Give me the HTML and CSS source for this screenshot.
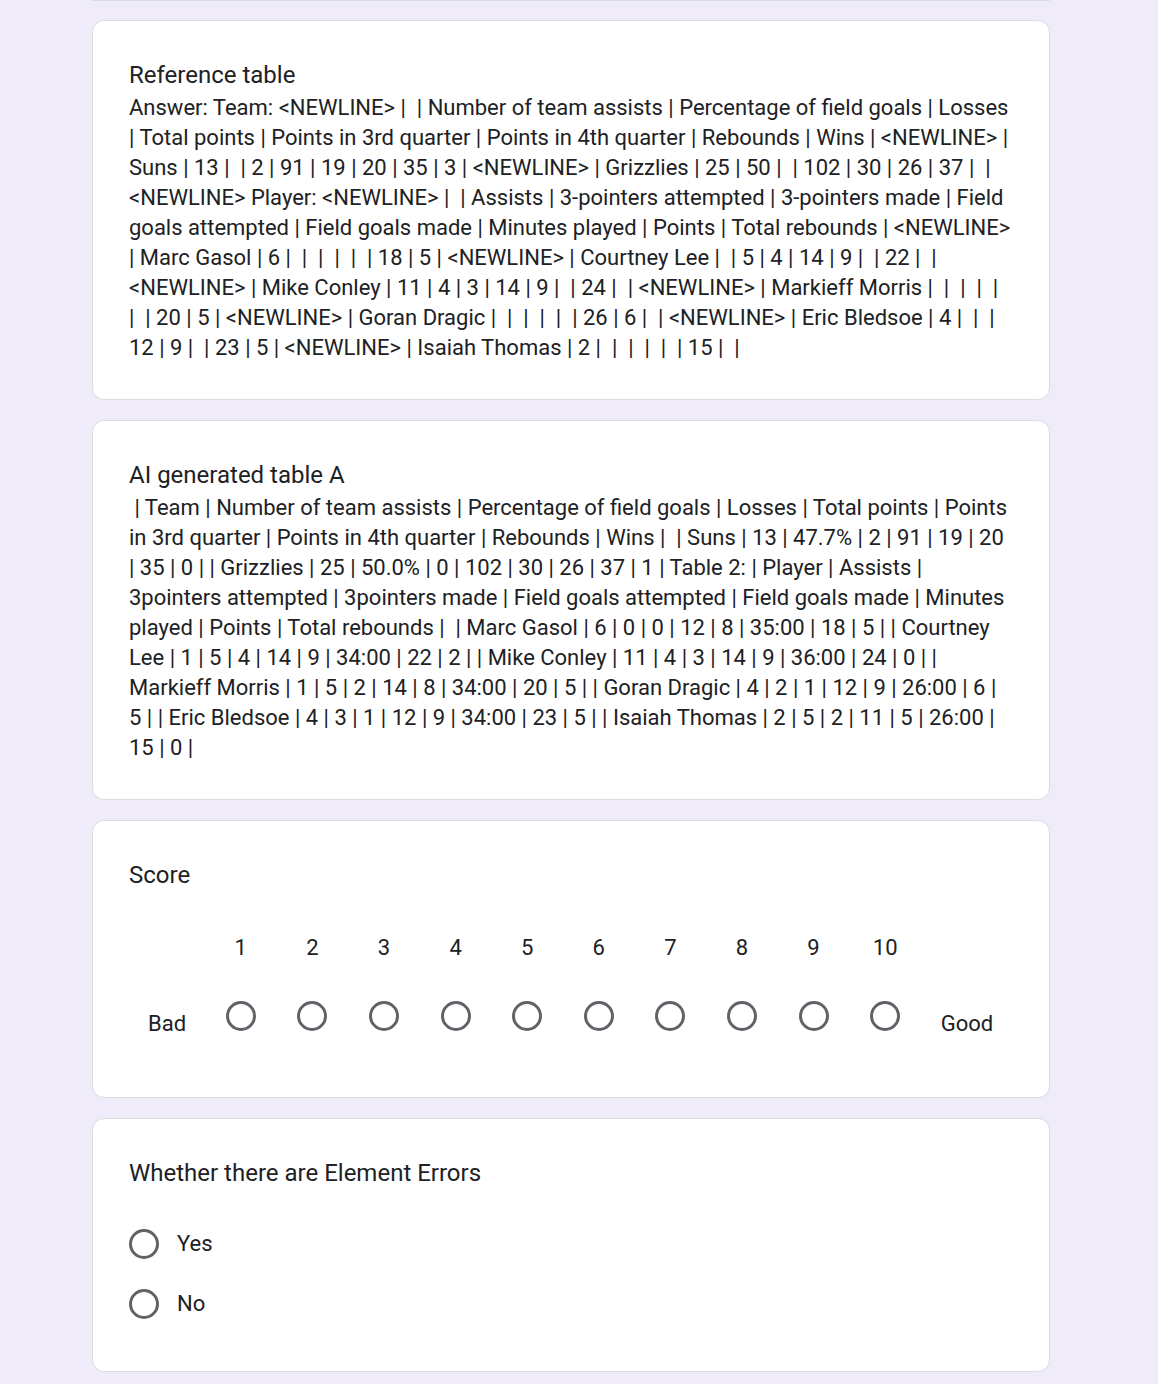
FILE: index.html
```html
<!DOCTYPE html>
<html>
<head>
<meta charset="utf-8">
<link rel="stylesheet" href="styles.css">
</head>
<body>
<div class="page">
  <div class="prev-card"></div>

  <div class="card">
    <div class="title">Reference table</div>
    <div class="desc">Answer: Team: &lt;NEWLINE&gt; |  | Number of team assists | Percentage of field goals | Losses | Total points | Points in 3rd quarter | Points in 4th quarter | Rebounds | Wins | &lt;NEWLINE&gt; | Suns | 13 |  | 2 | 91 | 19 | 20 | 35 | 3 | &lt;NEWLINE&gt; | Grizzlies | 25 | 50 |  | 102 | 30 | 26 | 37 |  | &lt;NEWLINE&gt; Player: &lt;NEWLINE&gt; |  | Assists | 3-pointers attempted | 3-pointers made | Field goals attempted | Field goals made | Minutes played | Points | Total rebounds | &lt;NEWLINE&gt; | Marc Gasol | 6 |  |  |  |  |  | 18 | 5 | &lt;NEWLINE&gt; | Courtney Lee |  | 5 | 4 | 14 | 9 |  | 22 |  | &lt;NEWLINE&gt; | Mike Conley | 11 | 4 | 3 | 14 | 9 |  | 24 |  | &lt;NEWLINE&gt; | Markieff Morris |  |  |  |  |  |  | 20 | 5 | &lt;NEWLINE&gt; | Goran Dragic |  |  |  |  |  | 26 | 6 |  | &lt;NEWLINE&gt; | Eric Bledsoe | 4 |  |  | 12 | 9 |  | 23 | 5 | &lt;NEWLINE&gt; | Isaiah Thomas | 2 |  |  |  |  |  | 15 |  |</div>
  </div>

  <div class="card">
    <div class="title">AI generated table A</div>
    <div class="desc"> | Team | Number of team assists | Percentage of field goals | Losses | Total points | Points in 3rd quarter | Points in 4th quarter | Rebounds | Wins |  | Suns | 13 | 47.7% | 2 | 91 | 19 | 20 | 35 | 0 | | Grizzlies | 25 | 50.0% | 0 | 102 | 30 | 26 | 37 | 1 | Table 2: | Player | Assists | 3pointers attempted | 3pointers made | Field goals attempted | Field goals made | Minutes played | Points | Total rebounds |  | Marc Gasol | 6 | 0 | 0 | 12 | 8 | 35:00 | 18 | 5 | | Courtney Lee | 1 | 5 | 4 | 14 | 9 | 34:00 | 22 | 2 | | Mike Conley | 11 | 4 | 3 | 14 | 9 | 36:00 | 24 | 0 | | Markieff Morris | 1 | 5 | 2 | 14 | 8 | 34:00 | 20 | 5 | | Goran Dragic | 4 | 2 | 1 | 12 | 9 | 26:00 | 6 | 5 | | Eric Bledsoe | 4 | 3 | 1 | 12 | 9 | 34:00 | 23 | 5 | | Isaiah Thomas | 2 | 5 | 2 | 11 | 5 | 26:00 | 15 | 0 |</div>
  </div>

  <div class="card">
    <div class="title">Score</div>
    <div class="scale">
      <div class="scale-label scale-bad">Bad</div>
      <div class="scale-opt"><span class="num">1</span><span class="radio"></span></div>
      <div class="scale-opt"><span class="num">2</span><span class="radio"></span></div>
      <div class="scale-opt"><span class="num">3</span><span class="radio"></span></div>
      <div class="scale-opt"><span class="num">4</span><span class="radio"></span></div>
      <div class="scale-opt"><span class="num">5</span><span class="radio"></span></div>
      <div class="scale-opt"><span class="num">6</span><span class="radio"></span></div>
      <div class="scale-opt"><span class="num">7</span><span class="radio"></span></div>
      <div class="scale-opt"><span class="num">8</span><span class="radio"></span></div>
      <div class="scale-opt"><span class="num">9</span><span class="radio"></span></div>
      <div class="scale-opt"><span class="num">10</span><span class="radio"></span></div>
      <div class="scale-label scale-good">Good</div>
    </div>
  </div>

  <div class="card card-choices">
    <div class="title">Whether there are Element Errors</div>
    <div class="choices">
      <div class="choice"><span class="radio"></span><span class="choice-text">Yes</span></div>
      <div class="choice"><span class="radio"></span><span class="choice-text">No</span></div>
    </div>
  </div>
</div>
</body>
</html>
```

FILE: styles.css
```css
html, body {
  margin: 0;
  padding: 0;
  background: #f0ebf8;
}
body {
  font-family: Roboto, "Liberation Sans", sans-serif;
  color: #202124;
}
.page {
  width: 958px;
  margin-left: 92px;
  display: flex;
  flex-direction: column;
  gap: 20px;
  padding-bottom: 40px;
}
.prev-card {
  height: 0;
  margin-bottom: -1px;
  border: 1px solid #dadce0;
  border-top: none;
  border-radius: 0 0 8px 8px;
  background: #fff;
}
.card {
  background: #fff;
  border: 1px solid #dadce0;
  border-radius: 12px;
  padding: 36px;
}
.title {
  font-size: 24px;
  line-height: 36px;
}
.desc {
  font-size: 22px;
  line-height: 30px;
  white-space: pre-wrap;
}
.radio {
  display: block;
  width: 24px;
  height: 24px;
  border: 3px solid #5f6368;
  border-radius: 50%;
  flex: 0 0 auto;
}
.scale {
  display: flex;
  align-items: flex-end;
  margin-top: 40px;
  margin-bottom: 22px;
  font-size: 22px;
}
.scale-label {
  line-height: 30px;
  text-align: center;
}
.scale-bad {
  flex: 0 0 76px;
}
.scale-good {
  flex: 1 1 auto;
}
.scale-opt {
  flex: 0 0 71.6px;
  display: flex;
  flex-direction: column;
  align-items: center;
}
.scale-opt .num {
  line-height: 30px;
  margin-bottom: 38px;
}
.scale-opt .radio {
  margin-bottom: 8px;
}
.choices {
  margin-top: 38px;
  margin-bottom: 16px;
  display: flex;
  flex-direction: column;
  gap: 30px;
}
.choice {
  display: flex;
  align-items: center;
  gap: 18px;
  font-size: 22px;
  line-height: 30px;
}
```
